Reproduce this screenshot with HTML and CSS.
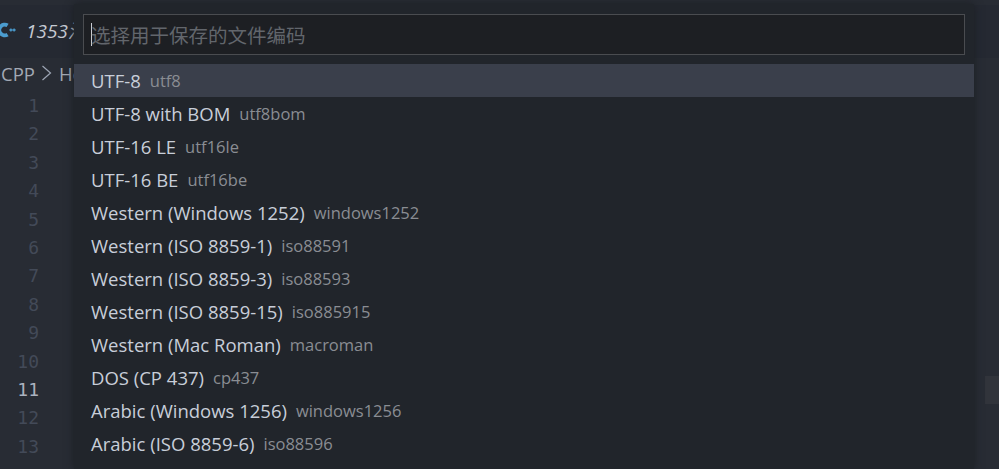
FILE: index.html
```html
<!DOCTYPE html>
<html lang="zh">
<head>
<meta charset="UTF-8">
<title>选择用于保存的文件编码</title>
<link rel="stylesheet" href="styles.css">
</head>
<body>

<div class="workbench">
    <div class="tabbar">
        <svg class="cpp-icon" width="16" height="16" viewBox="0 0 16 16">
            <path d="M7.6 3.4A5.4 5.4 0 1 0 7.6 12.6" stroke="#4b9ccf" stroke-width="3.8" fill="none"/>
            <path d="M9.4 8h3M10.9 6.4v3.2M12.6 8h3M14.1 6.4v3.2" stroke="#4b9ccf" stroke-width="1.3" fill="none"/>
        </svg>
        <span class="tab-name">1353清</span>
    </div>
    <div class="breadcrumb">
        <span>CPP</span>
        <svg class="crumb-sep" width="11" height="18" viewBox="0 0 11 18"><path d="M1.5 2l8 7-8 7" stroke="#9da5b4" stroke-width="1.2" fill="none"/></svg>
        <span>He</span>
    </div>
    <div class="gutter">
        <div>1</div>
        <div>2</div>
        <div>3</div>
        <div>4</div>
        <div>5</div>
        <div>6</div>
        <div>7</div>
        <div>8</div>
        <div>9</div>
        <div>10</div>
        <div class="current">11</div>
        <div>12</div>
        <div>13</div>
    </div>
    <div class="minimap-slider"></div>
</div>

<div class="quick-input">
    <div class="input-box">
        <span class="caret"></span>
        <span class="placeholder">选择用于保存的文件编码</span>
    </div>
    <ul class="enc-list">
        <li class="focused"><span class="label">UTF-8</span><span class="desc">utf8</span></li>
        <li><span class="label">UTF-8 with BOM</span><span class="desc">utf8bom</span></li>
        <li><span class="label">UTF-16 LE</span><span class="desc">utf16le</span></li>
        <li><span class="label">UTF-16 BE</span><span class="desc">utf16be</span></li>
        <li><span class="label">Western (Windows 1252)</span><span class="desc">windows1252</span></li>
        <li><span class="label">Western (ISO 8859-1)</span><span class="desc">iso88591</span></li>
        <li><span class="label">Western (ISO 8859-3)</span><span class="desc">iso88593</span></li>
        <li><span class="label">Western (ISO 8859-15)</span><span class="desc">iso885915</span></li>
        <li><span class="label">Western (Mac Roman)</span><span class="desc">macroman</span></li>
        <li><span class="label">DOS (CP 437)</span><span class="desc">cp437</span></li>
        <li><span class="label">Arabic (Windows 1256)</span><span class="desc">windows1256</span></li>
        <li><span class="label">Arabic (ISO 8859-6)</span><span class="desc">iso88596</span></li>
    </ul>
</div>

</body>
</html>
```
FILE: styles.css
```css
* {
    box-sizing: border-box;
}
html, body {
    margin: 0;
    height: 100%;
    overflow: hidden;
}
body {
    background-color: #282c34;
    font-family: "Open Sans", "Noto Sans CJK SC", sans-serif;
    color: #abb2bf;
}

/* editor behind the picker */
.workbench {
    height: 469px;
    padding-top: 5px;
}
.tabbar {
    height: 53px;
    background-color: #252932;
    display: flex;
    align-items: center;
}
.cpp-icon {
    margin-top: -3px;
}
.tab-name {
    margin-left: 10px;
    margin-top: -3px;
    font-size: 19px;
    font-style: italic;
    color: #c5cad3;
}
.breadcrumb {
    height: 30px;
    display: flex;
    align-items: center;
    gap: 6.5px;
    padding-left: 1px;
    font-size: 18.5px;
    color: #a3a9b4;
}
.gutter {
    width: 39px;
    margin-top: 4px;
    font-family: "DejaVu Sans Mono", monospace;
    font-size: 18px;
    line-height: 28.4px;
    text-align: right;
    color: #434a58;
}
.gutter .current {
    color: #abb2bf;
}
.minimap-slider {
    position: absolute;
    left: 985px;
    top: 376px;
    width: 14px;
    height: 28px;
    background-color: #31343b;
}

/* encoding picker */
.quick-input {
    position: absolute;
    left: 74px;
    top: 4px;
    width: 900px;
    height: 465px;
    padding-top: 10px;
    background-color: #21252b;
    box-shadow: 0 0 8px #1b1e23;
}
.input-box {
    height: 41px;
    margin: 0 9px;
    display: flex;
    align-items: center;
    padding-left: 7px;
    background-color: #1d1f23;
    border: 1px solid #4a4c50;
}
.caret {
    width: 1px;
    height: 23px;
    margin-right: -1px;
    background-color: #c8ccd4;
}
.placeholder {
    font-size: 19.5px;
    color: #62666c;
}
.enc-list {
    list-style: none;
    margin: 9px 0 0;
    padding: 0;
}
.enc-list li {
    height: 33px;
    display: flex;
    align-items: center;
    gap: 9px;
    padding-left: 17px;
    white-space: nowrap;
}
.enc-list li.focused {
    background-color: #3a3f4b;
}
.label {
    font-size: 18.5px;
    color: #c8ced9;
}
.desc {
    font-size: 16.5px;
    color: #8a8d93;
}
```
